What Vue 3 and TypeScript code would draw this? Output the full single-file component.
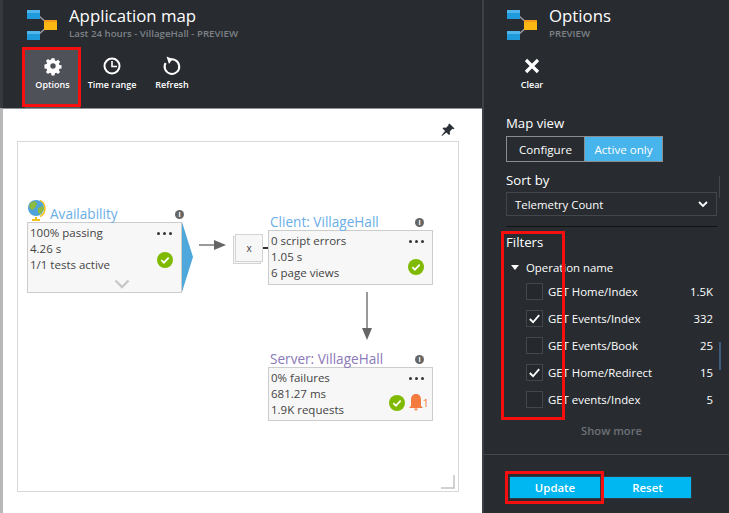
<script setup lang="ts">
import { ref } from 'vue'

interface MapNode {
  id: string
  title: string
  titleClass: string
  left: number
  top: number
  width: number
  height: number
  lines: string[]
}

interface FilterRow {
  name: string
  count: string
  checked: boolean
}

const tools = ['Options', 'Time range', 'Refresh']

const nodes: MapNode[] = [
  { id: 'avail', title: 'Availability', titleClass: 'blue', left: 9, top: 80, width: 155, height: 71, lines: ['100% passing', '4.26 s', '1/1 tests active'] },
  { id: 'client', title: 'Client: VillageHall', titleClass: 'blue', left: 250, top: 88, width: 165, height: 55, lines: ['0 script errors', '1.05 s', '6 page views'] },
  { id: 'server', title: 'Server: VillageHall', titleClass: 'purple', left: 250, top: 225, width: 165, height: 54, lines: ['0% failures', '681.27 ms', '1.9K requests'] }
]

const filters = ref<FilterRow[]>([
  { name: 'GET Home/Index', count: '1.5K', checked: false },
  { name: 'GET Events/Index', count: '332', checked: true },
  { name: 'GET Events/Book', count: '25', checked: false },
  { name: 'GET Home/Redirect', count: '15', checked: true },
  { name: 'GET events/Index', count: '5', checked: false }
])
</script>

<template>
  <div class="page">
    <section class="left">
      <header class="head">
        <div class="title-row">
          <svg class="logo" viewBox="0 0 30 30">
            <path d="M12 6 L20 13 M12 24 L20 17" stroke="#9a9da0" stroke-width="1.5" fill="none" />
            <rect x="0" y="0" width="13" height="9" fill="#1f9bdc" />
            <rect x="0" y="0" width="13" height="3" fill="#4fb5ec" />
            <rect x="0" y="21" width="13" height="9" fill="#1f9bdc" />
            <rect x="0" y="21" width="13" height="3" fill="#4fb5ec" />
            <rect x="17" y="10" width="13" height="10" fill="#fdb813" />
            <rect x="17" y="10" width="13" height="2" fill="#f59a1b" />
          </svg>
          <div>
            <div class="title">Application map</div>
            <div class="sub">Last 24 hours - VillageHall - PREVIEW</div>
          </div>
        </div>
        <div class="tools">
          <div v-for="t in tools" :key="t" class="tool" :class="{ active: t === 'Options' }">
            <svg v-if="t === 'Options'" class="ico" viewBox="0 0 20 20">
              <path fill="#fff" fill-rule="evenodd" d="M8.3 1.5h3.4l.4 2.4 1.5.6 2-1.4 2.3 2.3-1.4 2 .6 1.5 2.4.4v3.4l-2.4.4-.6 1.5 1.4 2-2.3 2.3-2-1.4-1.5.6-.4 2.4H8.3l-.4-2.4-1.5-.6-2 1.4-2.3-2.3 1.4-2-.6-1.5-2.4-.4V8.3l2.4-.4.6-1.5-1.4-2 2.3-2.3 2 1.4 1.5-.6zM10 7a3 3 0 1 0 0 6 3 3 0 0 0 0-6z" transform="translate(1 1) scale(.9)" />
            </svg>
            <svg v-else-if="t === 'Time range'" class="ico" viewBox="0 0 20 20">
              <circle cx="10" cy="10" r="7.5" fill="none" stroke="#fff" stroke-width="2" />
              <path d="M10 5v5.5h5" fill="none" stroke="#fff" stroke-width="1.6" />
            </svg>
            <svg v-else class="ico" viewBox="0 0 20 20">
              <path d="M6.5 4.2A7.3 7.3 0 1 1 3.6 7" fill="none" stroke="#fff" stroke-width="2" />
              <path d="M4.5 0.5l6 2.5-3.5 5z" fill="#fff" />
            </svg>
            <span>{{ t }}</span>
          </div>
        </div>
      </header>

      <main class="canvas">
        <svg class="pin" viewBox="0 0 14 14">
          <path d="M8.5 0.5l5 5-1.3.7-.8-.4-2.6 2.6.2 2.6-1 1-2.6-2.6L1 13l-.5-.5 3.6-4.4L1.5 5.5l1-1 2.6.2 2.6-2.6-.4-.8z" fill="#2b3036" />
        </svg>
        <div class="map">
          <svg class="globe" viewBox="0 0 20 22">
            <path d="M13 1.5a9 9 0 0 1 0 16" fill="none" stroke="#f2c21b" stroke-width="1.6" />
            <path d="M9 18v2M5 21h8" stroke="#f2c21b" stroke-width="2" fill="none" />
            <circle cx="9" cy="9" r="8" fill="#4fa3d9" />
            <path d="M3 4l5-2 2 3-2 4-3 2-3-3zM11 9l5-2 1 3-3 5-3-1z" fill="#8cbb3f" />
          </svg>

          <div
            v-for="n in nodes"
            :key="n.id"
            class="node"
            :class="n.id"
            :style="{ left: n.left + 'px', top: n.top + 'px', width: n.width + 'px', height: n.height + 'px' }"
          >
            <div class="node-title" :class="n.titleClass">{{ n.title }}</div>
            <span class="info">i</span>
            <div v-for="l in n.lines" :key="l" class="node-line">{{ l }}</div>
            <div class="dots"><i></i><i></i><i></i></div>
            <div class="status">
              <svg class="check" viewBox="0 0 16 16">
                <circle cx="8" cy="8" r="8" fill="#7fba00" />
                <path d="M4.3 8.2l2.6 2.5 4.8-5" fill="none" stroke="#fff" stroke-width="1.7" />
              </svg>
              <template v-if="n.id === 'server'">
                <svg class="bell" viewBox="0 0 14 17">
                  <path d="M7 0c3.5 0 5 2.6 5 5.5V12l2 2H0l2-2V5.500C2 2.600 3.500 0 7 0zM5 14.500h4L7 17z" fill="#f47b3f" />
                </svg>
                <span class="bell-n">1</span>
              </template>
            </div>
            <svg v-if="n.id === 'avail'" class="chev" viewBox="0 0 16 10">
              <path d="M1.500 1.500L8 8l6.500-6.500" fill="none" stroke="#c8c8c8" stroke-width="2.400" />
            </svg>
          </div>

          <div class="wedge"></div>

          <svg class="arrows" viewBox="0 0 442 351">
            <path d="M181 103h16" stroke="#777" stroke-width="1.500" />
            <path d="M196 98l12 5-12 5z" fill="#666" />
            <path d="M245 106h5" stroke="#333" stroke-width="2" />
            <path d="M349 150v38" stroke="#777" stroke-width="1.500" />
            <path d="M344 186l5 12 5-12z" fill="#666" />
            <path d="M436 333v13h-13" fill="none" stroke="#c4c4c4" stroke-width="1.500" />
          </svg>

          <div class="dep back"></div>
          <div class="dep front">x</div>
        </div>
      </main>
    </section>

    <aside class="right">
      <div class="title-row side">
        <svg class="logo" viewBox="0 0 30 30">
          <path d="M12 6 L20 13 M12 24 L20 17" stroke="#9a9da0" stroke-width="1.5" fill="none" />
          <rect x="0" y="0" width="13" height="9" fill="#1f9bdc" />
          <rect x="0" y="0" width="13" height="3" fill="#4fb5ec" />
          <rect x="0" y="21" width="13" height="9" fill="#1f9bdc" />
          <rect x="0" y="21" width="13" height="3" fill="#4fb5ec" />
          <rect x="17" y="10" width="13" height="10" fill="#fdb813" />
          <rect x="17" y="10" width="13" height="2" fill="#f59a1b" />
        </svg>
        <div>
          <div class="title">Options</div>
          <div class="sub">PREVIEW</div>
        </div>
      </div>
      <div class="clear">
        <svg class="ico" viewBox="0 0 20 20">
          <path d="M4 4l12 12M16 4L4 16" stroke="#fff" stroke-width="3.200" fill="none" />
        </svg>
        <span>Clear</span>
      </div>

      <div class="body">
        <div class="label">Map view</div>
        <div class="toggle">
          <span class="opt">Configure</span>
          <span class="opt on">Active only</span>
        </div>
        <div class="label sort">Sort by</div>
        <div class="select">
          <span>Telemetry Count</span>
          <svg class="caret" viewBox="0 0 10 7">
            <path d="M1 1l4 4 4-4" fill="none" stroke="#fff" stroke-width="1.800" />
          </svg>
        </div>
        <div class="rule"></div>
        <div class="label filters">Filters</div>
        <div class="op"><i class="tri"></i>Operation name</div>
        <div v-for="f in filters" :key="f.name" class="row">
          <span class="box">
            <svg v-if="f.checked" viewBox="0 0 16 16">
              <path d="M3 8.500l3.500 3.500L13 4.500" fill="none" stroke="#fff" stroke-width="2" />
            </svg>
          </span>
          <span class="name">{{ f.name }}</span>
          <span class="count">{{ f.count }}</span>
        </div>
        <div class="more">Show more</div>
      </div>

      <footer class="foot">
        <button class="btn update">Update</button>
        <button class="btn reset">Reset</button>
      </footer>

      <div class="hl hl-filters"></div>
      <div class="hl hl-update"></div>
      <div class="thumb"></div>
      <div class="bracket"></div>
    </aside>

    <div class="hl hl-options"></div>
  </div>
</template>

<style scoped>
.page {
  position: relative;
  display: flex;
  width: 729px;
  height: 513px;
  overflow: hidden;
  background: #282c31;
  color: #fff;
  font-family: "Open Sans", "Noto Sans", sans-serif;
}

.left {
  width: 484px;
  flex: none;
  box-sizing: border-box;
  display: flex;
  flex-direction: column;
  border-right: 2px solid #3d4145;
}

.head {
  height: 108px;
  box-sizing: border-box;
  border-left: 3px solid #363a3f;
}

.title-row {
  display: flex;
  gap: 12px;
  padding: 10px 0 0 24px;
  height: 47px;
  box-sizing: border-box;
}

.logo {
  width: 30px;
  height: 30px;
  flex: none;
}

.title {
  font-size: 16.800px;
  line-height: 20px;
  margin-top: -4px;
}

.sub {
  font-size: 9.700px;
  line-height: 12px;
  margin-top: 2px;
  font-weight: 600;
  color: #7d8186;
}

.tools {
  display: flex;
  padding-left: 22px;
}

.tool {
  width: 60px;
  height: 61px;
  display: flex;
  flex-direction: column;
  align-items: center;
  padding-top: 9px;
  box-sizing: border-box;
  font-size: 9px;
  font-weight: 600;
}

.tool.active {
  width: 55px;
  margin-right: 2px;
  background: #4e5157;
}

.ico {
  width: 20px;
  height: 20px;
  margin-bottom: 2px;
}

.canvas {
  position: relative;
  flex: 1;
  background: #fff;
  border-top: 1px solid #8f9194;
  border-left: 3px solid #b8b8b8;
  padding: 32px 0 0 14px;
}

.pin {
  position: absolute;
  left: 438px;
  top: 14px;
  width: 14px;
  height: 14px;
}

.map {
  position: relative;
  width: 442px;
  height: 351px;
  box-sizing: border-box;
  border: 1px solid #d8d8d8;
  color: #444;
}

.globe {
  position: absolute;
  left: 9px;
  top: 57px;
  width: 20px;
  height: 22px;
}

.node {
  position: absolute;
  box-sizing: border-box;
  padding: 2px 0 0 2px;
  background: #f7f7f7;
  border: 1px solid #ccc;
  font-size: 11.500px;
}

.node-title {
  position: absolute;
  top: -17px;
  left: 1px;
  font-size: 13.600px;
  line-height: 16px;
  white-space: nowrap;
}

.avail .node-title {
  left: 22px;
}

.blue {
  color: #6aaee6;
}

.purple {
  color: #8b79b8;
}

.node-line {
  line-height: 16px;
  white-space: nowrap;
}

.info {
  position: absolute;
  top: -13px;
  right: 8px;
  width: 9px;
  height: 9px;
  border-radius: 50%;
  background: #666;
  color: #fff;
  font-size: 7px;
  font-weight: 700;
  line-height: 9px;
  text-align: center;
}

.avail .info {
  right: -3px;
}

.dots {
  position: absolute;
  top: 9px;
  right: 8px;
  display: flex;
  gap: 3px;
}

.avail .dots {
  right: 9px;
}

.dots i {
  width: 3px;
  height: 3px;
  border-radius: 50%;
  background: #333;
}

.status {
  position: absolute;
  right: 8px;
  bottom: 9px;
  display: flex;
  align-items: center;
}

.avail .status {
  bottom: 24px;
}

.server .status {
  right: 3px;
  gap: 4px;
}

.check {
  width: 16px;
  height: 16px;
}

.bell {
  width: 14px;
  height: 17px;
}

.bell-n {
  margin-left: -5px;
  font-size: 11.500px;
  color: #f47b3f;
}

.chev {
  position: absolute;
  left: 86px;
  bottom: 3px;
  width: 16px;
  height: 10px;
}

.wedge {
  position: absolute;
  left: 164px;
  top: 80px;
  width: 0;
  height: 0;
  border-left: 11px solid #4fa8dc;
  border-top: 35px solid transparent;
  border-bottom: 35px solid transparent;
}

.arrows {
  position: absolute;
  left: 0;
  top: 0;
  width: 442px;
  height: 351px;
}

.dep {
  position: absolute;
  box-sizing: border-box;
  width: 28px;
  height: 28px;
  background: #f7f7f7;
  border: 1px solid #d4d4d4;
}

.dep.back {
  left: 215px;
  top: 94px;
}

.dep.front {
  left: 217px;
  top: 92px;
  font-size: 10px;
  line-height: 26px;
  text-align: center;
}

.right {
  position: relative;
  flex: 1;
  display: flex;
  flex-direction: column;
}

.title-row.side {
  padding-left: 23px;
}

.clear {
  display: flex;
  flex-direction: column;
  align-items: center;
  width: 50px;
  margin-left: 23px;
  padding-top: 9px;
  font-size: 9px;
  font-weight: 600;
}

.body {
  padding: 0 12px 0 22px;
  flex: 1;
  margin-top: 23px;
}

.label {
  font-size: 13.200px;
  line-height: 18px;
}

.toggle {
  display: flex;
  width: 157px;
  height: 26px;
  margin-top: 4px;
  box-sizing: border-box;
  border: 1px solid #8b8d90;
  font-size: 11.600px;
}

.opt {
  flex: 1;
  display: flex;
  align-items: center;
  justify-content: center;
}

.opt.on {
  background: #47b4ec;
  border-left: 1px solid #8b8d90;
}

.sort {
  margin-top: 9px;
}

.select {
  display: flex;
  align-items: center;
  justify-content: space-between;
  height: 24px;
  margin-top: 3px;
  padding: 0 8px;
  box-sizing: border-box;
  border: 1px solid #43474c;
  font-size: 11.400px;
}

.caret {
  width: 10px;
  height: 7px;
}

.rule {
  height: 1px;
  margin-top: 10px;
  background: #101214;
}

.filters {
  margin-top: 6px;
}

.op {
  display: flex;
  align-items: center;
  margin-top: 7px;
  margin-bottom: 2px;
  height: 18px;
  padding-left: 5px;
  font-size: 11.400px;
}

.tri {
  width: 0;
  height: 0;
  margin-right: 7px;
  border-left: 4.500px solid transparent;
  border-right: 4.500px solid transparent;
  border-top: 5px solid #fff;
}

.row {
  display: flex;
  align-items: center;
  height: 27px;
  padding-left: 20px;
  padding-right: 4px;
  font-size: 11.400px;
}

.box {
  width: 17px;
  height: 17px;
  box-sizing: border-box;
  border: 1px solid #43474c;
  background: #25282c;
  margin-right: 5px;
}

.box svg {
  display: block;
  width: 15px;
  height: 15px;
}

.name {
  flex: 1;
}

.more {
  margin-top: 10px;
  text-align: center;
  font-size: 11.200px;
  font-weight: 600;
  color: #6e7175;
}

.foot {
  display: flex;
  padding: 21px 0 14px 25px;
  border-top: 1px solid #44484d;
}

.btn {
  height: 23px;
  padding: 0;
  border: 1px solid #303840;
  background: #00b7f1;
  color: #fff;
  font-family: inherit;
  font-size: 11.400px;
  font-weight: 600;
}

.update {
  width: 92px;
}

.reset {
  width: 89px;
  margin-left: 2px;
}

.hl {
  position: absolute;
  box-sizing: border-box;
  border: 3px solid #f50f0f;
}

.hl-options {
  left: 22px;
  top: 47px;
  width: 59px;
  height: 60px;
}

.hl-filters {
  left: 17px;
  top: 231px;
  width: 64px;
  height: 189px;
}

.hl-update {
  left: 21px;
  top: 471px;
  width: 99px;
  height: 33px;
}

.thumb {
  position: absolute;
  left: 235px;
  top: 342px;
  width: 2px;
  height: 28px;
  background: #3f5c80;
}

.bracket {
  position: absolute;
  left: 235px;
  top: 176px;
  width: 1px;
  height: 22px;
  background: #43474c;
}
</style>

<style>
html,
body {
  margin: 0;
  background: #282c31;
}
</style>
